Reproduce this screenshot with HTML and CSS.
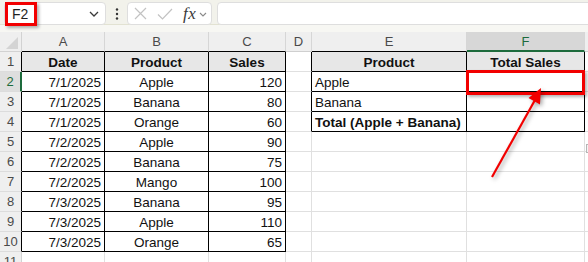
FILE: index.html
```html
<!DOCTYPE html>
<html>
<head>
<meta charset="utf-8">
<link rel="stylesheet" href="styles.css">
</head>
<body>
<div class="toolbar">
  <div class="namebox">
    <span class="namebox-text">F2</span>
    <svg class="chev" width="10" height="6" viewBox="0 0 10 6"><path d="M1 1l4 4 4-4" stroke="#3a3a3a" stroke-width="1.3" fill="none"/></svg>
  </div>
  <div class="dots">
    <svg width="4" height="12" viewBox="0 0 4 12"><circle cx="2" cy="1.5" r="1.2" fill="#333"/><circle cx="2" cy="6" r="1.2" fill="#333"/><circle cx="2" cy="10.5" r="1.2" fill="#333"/></svg>
  </div>
  <div class="fxbox">
    <svg class="ico-x" width="13" height="13" viewBox="0 0 13 13"><path d="M1 1L12 12M12 1L1 12" stroke="#c2c2c2" stroke-width="1.2" fill="none"/></svg>
    <svg class="ico-ok" width="16" height="12" viewBox="0 0 16 12"><path d="M1 6.5l4.5 4.5L15 1" stroke="#c2c2c2" stroke-width="1.2" fill="none"/></svg>
    <span class="fx">fx</span>
    <svg class="chev-s" width="8" height="5" viewBox="0 0 8 5"><path d="M1 1l3 3 3-3" stroke="#8a8a8a" stroke-width="1.1" fill="none"/></svg>
  </div>
  <div class="formula"></div>
</div>
<div class="gap"></div>
<div class="sheet">
  <div class="corner"><svg width="22" height="20" viewBox="0 0 22 20"><polygon points="18,5 18,17 6,17" fill="#d4d4d4"/></svg></div>
  <div class="ch ch-t">A</div><div class="ch ch-t">B</div><div class="ch ch-t">C</div><div class="ch">D</div><div class="ch ch-t">E</div><div class="ch ch-sel">F</div><div class="ch ch-last"></div>

  <div class="rh rh-t">1</div>
  <div class="c t hd">Date</div><div class="c t hd">Product</div><div class="c t hd">Sales</div><div class="c d-t"></div><div class="c t hd">Product</div><div class="c t hd">Total Sales</div><div class="c"></div>

  <div class="rh rh-sel">2</div>
  <div class="c t r">7/1/2025</div><div class="c t m">Apple</div><div class="c t r">120</div><div class="c d-t"></div><div class="c t">Apple</div><div class="c t f2"></div><div class="c"></div>

  <div class="rh rh-t">3</div>
  <div class="c t r">7/1/2025</div><div class="c t m">Banana</div><div class="c t r">80</div><div class="c d-t"></div><div class="c t">Banana</div><div class="c t"></div><div class="c"></div>

  <div class="rh rh-t">4</div>
  <div class="c t r">7/1/2025</div><div class="c t m">Orange</div><div class="c t r">60</div><div class="c d-t"></div><div class="c t b">Total (Apple + Banana)</div><div class="c t"></div><div class="c"></div>

  <div class="rh rh-t">5</div>
  <div class="c t r">7/2/2025</div><div class="c t m">Apple</div><div class="c t r">90</div><div class="c"></div><div class="c"></div><div class="c"></div><div class="c"></div>

  <div class="rh rh-t">6</div>
  <div class="c t r">7/2/2025</div><div class="c t m">Banana</div><div class="c t r">75</div><div class="c"></div><div class="c"></div><div class="c"></div><div class="c"></div>

  <div class="rh rh-t">7</div>
  <div class="c t r">7/2/2025</div><div class="c t m">Mango</div><div class="c t r">100</div><div class="c"></div><div class="c"></div><div class="c"></div><div class="c"></div>

  <div class="rh rh-t">8</div>
  <div class="c t r">7/3/2025</div><div class="c t m">Banana</div><div class="c t r">95</div><div class="c"></div><div class="c"></div><div class="c"></div><div class="c"></div>

  <div class="rh rh-t">9</div>
  <div class="c t r">7/3/2025</div><div class="c t m">Apple</div><div class="c t r">110</div><div class="c"></div><div class="c"></div><div class="c"></div><div class="c"></div>

  <div class="rh rh-t">10</div>
  <div class="c t r">7/3/2025</div><div class="c t m">Orange</div><div class="c t r">65</div><div class="c"></div><div class="c"></div><div class="c"></div><div class="c"></div>

  <div class="rh">11</div>
  <div class="c"></div><div class="c"></div><div class="c"></div><div class="c"></div><div class="c"></div><div class="c"></div><div class="c"></div>
</div>

<div class="mark mark-name"></div>
<div class="mark mark-cell"></div>
<div class="scroll-tab"></div>
<svg class="arrow" width="588" height="262" viewBox="0 0 588 262">
  <line x1="492" y1="177" x2="535" y2="100" stroke="#f20000" stroke-width="2.2"/>
  <polygon points="541,88 540,104.5 528.5,98" fill="#f20000"/>
</svg>
</body>
</html>
```
FILE: styles.css
```css
html, body {
  margin: 0;
  padding: 0;
  background: #ffffff;
  overflow: hidden;
  font-family: "Liberation Sans", Arial, sans-serif;
}

body {
  width: 588px;
  height: 262px;
  position: relative;
}

.toolbar {
  display: flex;
  align-items: flex-start;
  height: 25px;
  padding: 2px 0 0 4px;
  box-sizing: border-box;
  background: #f2f2eb;
  border-bottom: 1px solid #e2e2d2;
}

.namebox {
  width: 102px;
  height: 23px;
  box-sizing: border-box;
  background: #ffffff;
  border: 1px solid #dedede;
  border-radius: 4px;
  display: flex;
  align-items: center;
  justify-content: space-between;
  padding: 0 6px 0 7px;
}

.namebox-text {
  font-size: 14px;
  color: #1f1f1f;
}

.chev {
  margin-top: 1px;
}

.dots {
  width: 21px;
  height: 23px;
  display: flex;
  align-items: center;
  justify-content: center;
}

.fxbox {
  width: 85px;
  height: 23px;
  box-sizing: border-box;
  background: #ffffff;
  border: 1px solid #dedede;
  border-radius: 4px;
  display: flex;
  align-items: center;
  padding-left: 5px;
}

.ico-x {
  margin-left: 1px;
}

.ico-ok {
  margin-left: 10px;
}

.fx {
  margin-left: 10px;
  font-family: "Liberation Serif", "Times New Roman", serif;
  font-style: italic;
  font-size: 17px;
  color: #3a3a3a;
  line-height: 20px;
  letter-spacing: 0.5px;
}

.chev-s {
  margin-left: 3px;
  margin-top: 2px;
}

.formula {
  flex: 1;
  height: 23px;
  margin-left: 5px;
  margin-right: -8px;
  box-sizing: border-box;
  background: #ffffff;
  border: 1px solid #dedede;
  border-radius: 4px;
}

.gap {
  height: 7px;
  background: #f7f7f3;
}

.sheet {
  display: grid;
  grid-template-columns: 22px 83px 104px 77px 26px 155px 118px 1fr;
  grid-auto-rows: 20px;
  font-size: 13.5px;
  color: #111111;
}

.sheet > div {
  box-sizing: border-box;
  border-right: 1px solid #e0e0e0;
  border-bottom: 1px solid #e0e0e0;
  white-space: nowrap;
  overflow: hidden;
  line-height: 20px;
}

.corner {
  background: #efefef;
}

.sheet > .corner {
  border-right-color: #d2d2d2;
  border-bottom-color: #d2d2d2;
}

.ch {
  background: #efefef;
  text-align: center;
  color: #4a4a4a;
  font-size: 13px;
}

.sheet > .ch {
  border-right-color: #d6d6d6;
  border-bottom-color: #cfcfcf;
}

.sheet > .ch-t {
  border-bottom-color: #000000;
}

.sheet > .ch-sel {
  background: #d7d7d7;
  color: #1d6b3c;
  border-bottom: 2px solid #1d6b3c;
}

.sheet > .ch-last {
  border-right: none;
}

.rh {
  background: #efefef;
  text-align: center;
  color: #4a4a4a;
  font-size: 13px;
}

.sheet > .rh {
  border-right-color: #d2d2d2;
  border-bottom-color: #dcdcdc;
}

.sheet > .rh-t {
  border-right-color: #000000;
}

.sheet > .rh-sel {
  background: #dedede;
  color: #1d6b3c;
  border-right: 2px solid #1d6b3c;
}

.c {
  padding: 1px 3px 0 3px;
  line-height: 19px;
}

.sheet > .t {
  border-right-color: #000000;
  border-bottom-color: #000000;
}

.sheet > .d-t {
  border-right-color: #000000;
}

.hd {
  background: #e7e7e7;
  font-weight: bold;
  text-align: center;
}

.r {
  text-align: right;
}

.m {
  text-align: center;
}

.b {
  font-weight: bold;
}

.f2 {
  box-shadow: inset 2px 0 0 #1d6b3c;
}

.mark {
  position: absolute;
  box-sizing: border-box;
  border: 3px solid #f20000;
  box-shadow: 2px 2px 3px rgba(0, 0, 0, 0.3);
}

.mark-name {
  left: 5px;
  top: 2px;
  width: 32px;
  height: 24px;
}

.mark-cell {
  left: 466px;
  top: 70px;
  width: 119px;
  height: 25px;
}

.scroll-tab {
  position: absolute;
  left: 586px;
  top: 144px;
  width: 6px;
  height: 9px;
  box-sizing: border-box;
  border: 1px solid #b5b5b5;
  background: #f4f4f4;
}

.arrow {
  position: absolute;
  left: 0;
  top: 0;
  pointer-events: none;
  filter: drop-shadow(2px 2px 2px rgba(0, 0, 0, 0.35));
}
```
